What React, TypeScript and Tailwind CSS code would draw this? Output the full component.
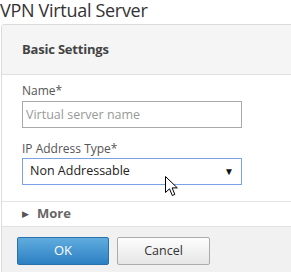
import React from 'react'

function Cursor() {
  return (
    <svg className="absolute left-[165px] top-[176px]" width="14" height="22" viewBox="0 0 14 22">
      <path
        d="M0.5 0.5 L0.5 16.5 L4.5 12.8 L7.3 19.5 L9.8 18.4 L7.1 11.9 L12.3 11.9 Z"
        fill="#fff"
        stroke="#000"
        strokeWidth="1"
        strokeLinejoin="miter"
      />
    </svg>
  )
}

export default function App() {
  return (
    <div
      className="relative w-[291px] h-[272px] overflow-hidden bg-white text-[#333]"
      style={{ fontFamily: '"Open Sans", "Noto Sans", sans-serif' }}
    >
      <h1 className="h-[24px] pt-px text-[18px] leading-[18px] text-[#333] tracking-[-0.3px]">
        VPN Virtual Server
      </h1>
      <div className="ml-px w-[300px] rounded-tl-[3px] border border-[#dcdcdc]">
        <div className="h-[50px] bg-[#f5f5f5] border-b border-[#e0e0e0] pl-[20px] pt-[15px]">
          <h2 className="text-[13px] font-bold text-[#444] tracking-[-0.2px]">Basic Settings</h2>
        </div>
        <div className="pl-[20px] pt-[8px] pb-[16px]">
          <label className="block text-[12px] leading-[16px] text-[#555]">Name*</label>
          <input
            className="mt-[2px] block w-[220px] h-[27px] border border-[#a9a9a9] px-[3px] text-[12.5px] text-[#222] placeholder:text-[#999] outline-none"
            placeholder="Virtual server name"
          />
          <label className="mt-[13px] block text-[12px] leading-[16px] text-[#555]">IP Address Type*</label>
          <div className="mt-[1px] flex h-[27px] w-[220px] items-center justify-between border border-[#7da2e4] pl-[7px] pr-[7px]">
            <span className="text-[12.5px] text-[#222]">Non Addressable</span>
            <span className="text-[10px] text-[#111]">▼</span>
          </div>
        </div>
        <div className="flex h-[25px] items-center border-t border-[#e2e2e2] pl-[20px]">
          <span className="mr-[8px] text-[9px] text-[#555]">▶</span>
          <span className="text-[13px] font-bold text-[#666]">More</span>
        </div>
        <div className="flex h-[46px] gap-[8px] border-t border-[#e0e0e0] bg-[#f1f1f1] pl-[15px] pt-[10px]">
          <button className="h-[28px] w-[92px] rounded-[2px] border border-[#2a70aa] bg-gradient-to-b from-[#60acdf] to-[#2b80c2] text-[13px] text-white">
            OK
          </button>
          <button className="h-[28px] w-[93px] rounded-[2px] border border-[#ababab] bg-gradient-to-b from-[#fdfdfd] to-[#e6e6e6] text-[12.5px] text-[#333]">
            Cancel
          </button>
        </div>
      </div>
      <Cursor />
    </div>
  )
}
